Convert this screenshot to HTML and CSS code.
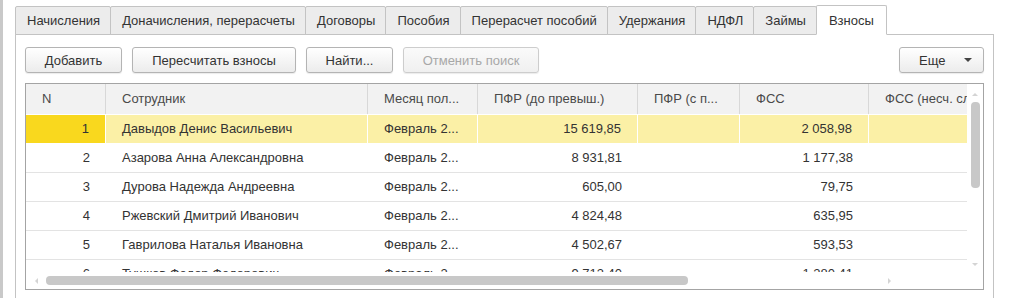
FILE: index.html
```html
<!DOCTYPE html>
<html lang="ru">

<head>
    <meta charset="UTF-8">
    <title>Взносы</title>
    <link rel="stylesheet" href="styles.css">
</head>

<body>
    <div class="edge"></div>

    <div class="form">
        <div class="tabs">
            <div class="tab">Начисления</div>
            <div class="tab">Доначисления, перерасчеты</div>
            <div class="tab">Договоры</div>
            <div class="tab">Пособия</div>
            <div class="tab">Перерасчет пособий</div>
            <div class="tab">Удержания</div>
            <div class="tab">НДФЛ</div>
            <div class="tab">Займы</div>
            <div class="tab active">Взносы</div>
        </div>

        <div class="panel">
            <div class="toolbar">
                <button class="btn w-add">Добавить</button>
                <button class="btn w-recalc">Пересчитать взносы</button>
                <button class="btn w-find">Найти...</button>
                <button class="btn w-cancel" disabled>Отменить поиск</button>
                <button class="btn more">Еще <span class="caret"></span></button>
            </div>

            <div class="grid">
                <div class="viewport">
                    <div class="row head">
                        <div class="c c-n">N</div>
                        <div class="c c-emp">Сотрудник</div>
                        <div class="c c-month">Месяц пол...</div>
                        <div class="c c-pfr">ПФР (до превыш.)</div>
                        <div class="c c-pfr2">ПФР (с п...</div>
                        <div class="c c-fss">ФСС</div>
                        <div class="c c-fss2">ФСС (несч. случ.)</div>
                    </div>
                    <div class="row sel">
                        <div class="c c-n num cur">1</div>
                        <div class="c c-emp">Давыдов Денис Васильевич</div>
                        <div class="c c-month">Февраль 2...</div>
                        <div class="c c-pfr num">15 619,85</div>
                        <div class="c c-pfr2"></div>
                        <div class="c c-fss num">2 058,98</div>
                        <div class="c c-fss2"></div>
                    </div>
                    <div class="row">
                        <div class="c c-n num">2</div>
                        <div class="c c-emp">Азарова Анна Александровна</div>
                        <div class="c c-month">Февраль 2...</div>
                        <div class="c c-pfr num">8 931,81</div>
                        <div class="c c-pfr2"></div>
                        <div class="c c-fss num">1 177,38</div>
                        <div class="c c-fss2"></div>
                    </div>
                    <div class="row">
                        <div class="c c-n num">3</div>
                        <div class="c c-emp">Дурова Надежда Андреевна</div>
                        <div class="c c-month">Февраль 2...</div>
                        <div class="c c-pfr num">605,00</div>
                        <div class="c c-pfr2"></div>
                        <div class="c c-fss num">79,75</div>
                        <div class="c c-fss2"></div>
                    </div>
                    <div class="row">
                        <div class="c c-n num">4</div>
                        <div class="c c-emp">Ржевский Дмитрий Иванович</div>
                        <div class="c c-month">Февраль 2...</div>
                        <div class="c c-pfr num">4 824,48</div>
                        <div class="c c-pfr2"></div>
                        <div class="c c-fss num">635,95</div>
                        <div class="c c-fss2"></div>
                    </div>
                    <div class="row">
                        <div class="c c-n num">5</div>
                        <div class="c c-emp">Гаврилова Наталья Ивановна</div>
                        <div class="c c-month">Февраль 2...</div>
                        <div class="c c-pfr num">4 502,67</div>
                        <div class="c c-pfr2"></div>
                        <div class="c c-fss num">593,53</div>
                        <div class="c c-fss2"></div>
                    </div>
                    <div class="row">
                        <div class="c c-n num">6</div>
                        <div class="c c-emp">Тушков Федор Федорович</div>
                        <div class="c c-month">Февраль 2...</div>
                        <div class="c c-pfr num">9 713,40</div>
                        <div class="c c-pfr2"></div>
                        <div class="c c-fss num">1 280,41</div>
                        <div class="c c-fss2"></div>
                    </div>
                </div>

                <div class="vscroll">
                    <span class="arrow up"></span>
                    <span class="thumb"></span>
                    <span class="arrow down"></span>
                </div>

                <div class="hscroll">
                    <span class="arrow left"></span>
                    <span class="thumb"></span>
                    <span class="arrow right"></span>
                </div>
                <div class="corner"></div>
            </div>
        </div>
    </div>
</body>

</html>
```

FILE: styles.css
```css
* {
    margin: 0;
    padding: 0;
    box-sizing: border-box;
}

body {
    font-family: "Liberation Sans", Arial, sans-serif;
    font-size: 13px;
    color: #333;
    background: #fff;
    display: flex;
    height: 298px;
    overflow: hidden;
}

.edge {
    width: 3px;
    background: #c9c9c9;
    flex: none;
}

.form {
    padding: 5px 0 0 12px;
    width: 990px;
}

/* Tabs */
.tabs {
    display: flex;
    align-items: flex-end;
    height: 30px;
    position: relative;
    z-index: 1;
}

.tab {
    height: 29px;
    line-height: 27px;
    padding: 0 10px 0 11px;
    background: #ececec;
    border: 1px solid #c3c3c3;
    border-radius: 2px 2px 0 0;
    margin-right: -1px;
    white-space: nowrap;
}

.tab.active {
    height: 30px;
    background: #fff;
    border-bottom-color: #fff;
    line-height: 29px;
    padding: 0 12px;
}

.panel {
    border: 1px solid #c3c3c3;
    margin-top: -1px;
    width: 979px;
    height: 270px;
    padding: 12px 9px 0 9px;
}

/* Buttons */
.toolbar {
    display: flex;
    gap: 10px;
    height: 26px;
}

.btn {
    font-family: inherit;
    font-size: 13px;
    color: #333;
    height: 26px;
    border: 1px solid #b4b4b4;
    border-radius: 3px;
    background: linear-gradient(#ffffff, #ececec);
    box-shadow: 0 1px 1px rgba(0, 0, 0, 0.08);
}

.btn:disabled {
    color: #a8a8a8;
    border-color: #cdcdcd;
    background: linear-gradient(#fafafa, #f0f0f0);
}

.w-add { width: 97px; }
.w-recalc { width: 164px; }
.w-find { width: 87px; }
.w-cancel { width: 136px; }

.more {
    margin-left: auto;
    width: 85px;
    display: flex;
    align-items: center;
    padding: 0 11px 0 19px;
    justify-content: space-between;
}

.caret {
    border-left: 4px solid transparent;
    border-right: 4px solid transparent;
    border-top: 4px solid #444;
}

/* Grid */
.grid {
    margin-top: 10px;
    border: 1px solid #a4a4a4;
    height: 207px;
    display: grid;
    grid-template-columns: 941px 16px;
    grid-template-rows: 188px 17px;
}

.viewport {
    overflow: hidden;
}

.row {
    display: flex;
    height: 29px;
    border-bottom: 1px solid #e3e3e3;
    line-height: 28px;
}

.row.head {
    height: 31px;
    line-height: 30px;
    background: #f2f2f2;
    color: #4a4a4a;
    border-bottom: 1px solid #fff;
}

.c {
    flex: none;
    padding: 0 16px;
    white-space: nowrap;
    overflow: hidden;
}

.head .c {
    border-right: 1px solid #d8d8d8;
}

.c.num {
    text-align: right;
}

.c-n { width: 80px; }
.c-emp { width: 262px; }
.c-month { width: 110px; }
.c-pfr { width: 160px; }
.c-pfr2 { width: 102px; }
.c-fss { width: 129px; }
.c-fss2 { width: 160px; }

.row.sel {
    background: #fbf0a6;
    border-bottom-color: #fff;
}

.row.sel .c {
    border-right: 1px solid #fff;
}

.row.sel .cur {
    background: #f9d81e;
}

/* Scrollbars */
.vscroll {
    display: flex;
    flex-direction: column;
    align-items: center;
    padding-top: 9px;
}

.vscroll .thumb {
    width: 9px;
    height: 86px;
    margin-top: 6px;
    border-radius: 4px;
    background: #c8c8c8;
}

.vscroll .down {
    margin-top: auto;
    margin-bottom: 6px;
}

.hscroll {
    display: flex;
    align-items: center;
    padding: 0 0 0 9px;
}

.hscroll .thumb {
    width: 642px;
    height: 9px;
    margin-left: 8px;
    border-radius: 4px;
    background: #c8c8c8;
}

.hscroll .right {
    margin-left: auto;
    margin-right: 76px;
}

.arrow {
    width: 0;
    height: 0;
}

.arrow.up {
    border-left: 3px solid transparent;
    border-right: 3px solid transparent;
    border-bottom: 3px solid #d4d4d4;
}

.arrow.down {
    border-left: 3px solid transparent;
    border-right: 3px solid transparent;
    border-top: 3px solid #d4d4d4;
}

.arrow.left {
    border-top: 3px solid transparent;
    border-bottom: 3px solid transparent;
    border-right: 3px solid #d4d4d4;
}

.arrow.right {
    border-top: 3px solid transparent;
    border-bottom: 3px solid transparent;
    border-left: 3px solid #d4d4d4;
}
```
